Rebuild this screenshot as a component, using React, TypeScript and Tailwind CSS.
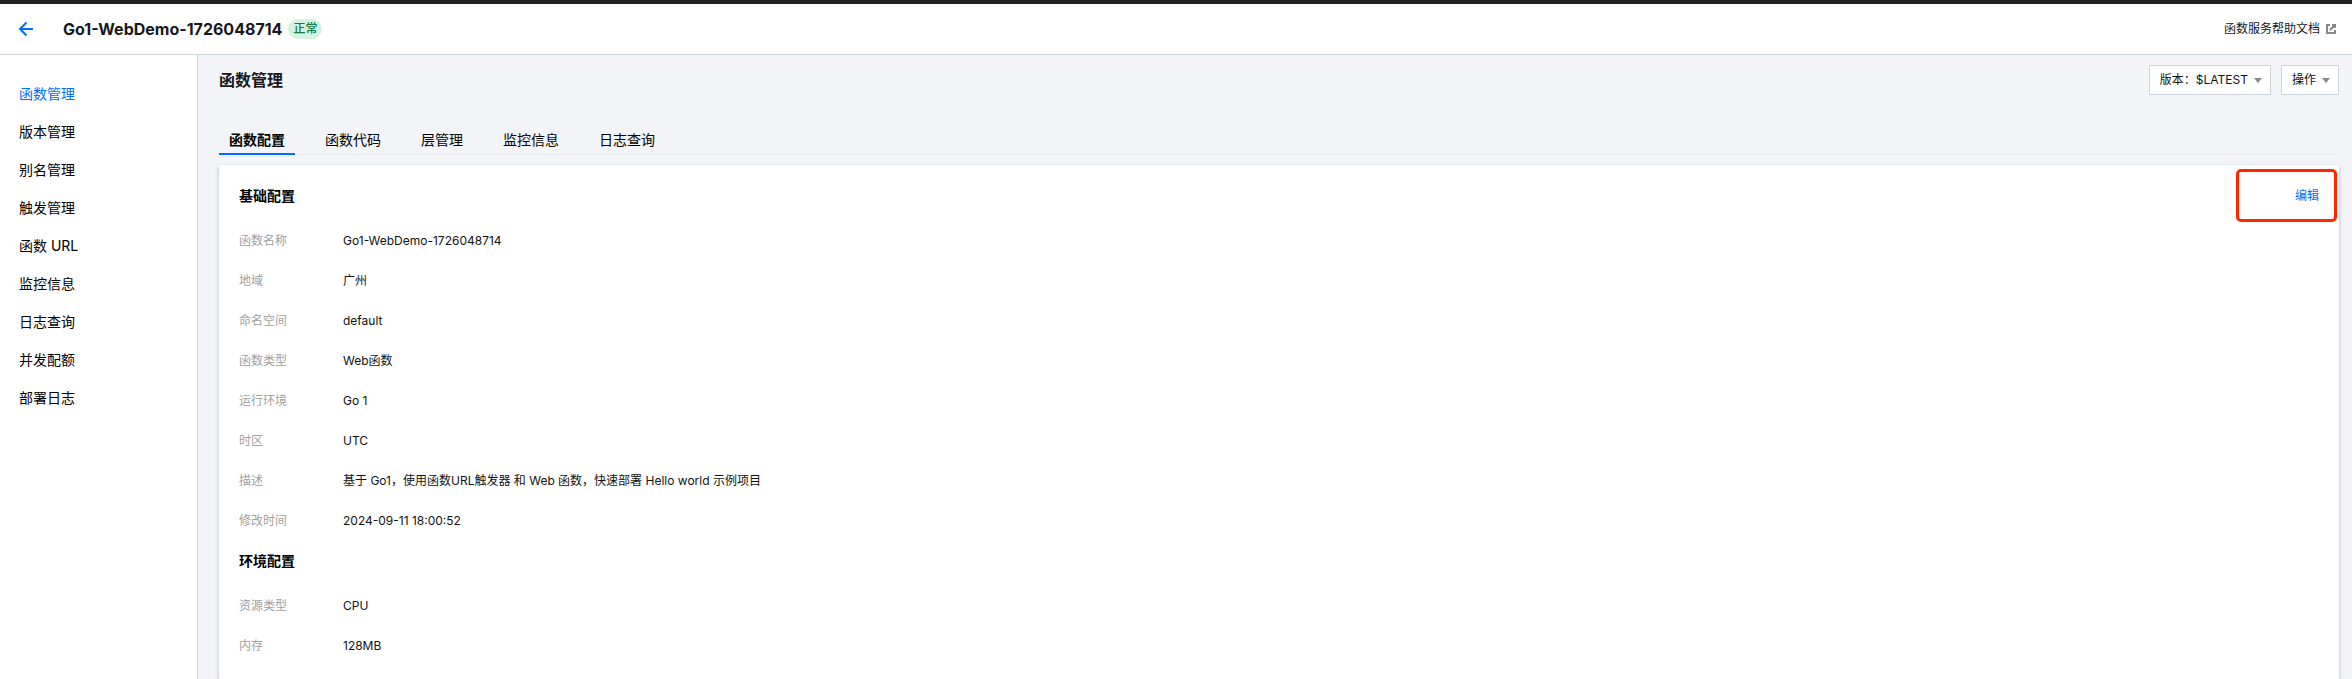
import React from "react";

const menu = ["函数管理", "版本管理", "别名管理", "触发管理", "函数 URL", "监控信息", "日志查询", "并发配额", "部署日志"];
const tabs = ["函数配置", "函数代码", "层管理", "监控信息", "日志查询"];

const sections: { title: string; rows: [string, string][] }[] = [
  {
    title: "基础配置",
    rows: [
      ["函数名称", "Go1-WebDemo-1726048714"],
      ["地域", "广州"],
      ["命名空间", "default"],
      ["函数类型", "Web函数"],
      ["运行环境", "Go 1"],
      ["时区", "UTC"],
      ["描述", "基于 Go1，使用函数URL触发器 和 Web 函数，快速部署 Hello world 示例项目"],
      ["修改时间", "2024-09-11 18:00:52"],
    ],
  },
  {
    title: "环境配置",
    rows: [
      ["资源类型", "CPU"],
      ["内存", "128MB"],
    ],
  },
];

function Caret() {
  return (
    <svg className="h-[5px] w-2 fill-[#888]" viewBox="0 0 8 5" aria-hidden="true">
      <path d="M0 0h8L4 5z" />
    </svg>
  );
}

function DropButton({ children }: { children: React.ReactNode }) {
  return (
    <button type="button" className="flex h-[30px] items-center gap-[6px] border border-[#cfd5de] bg-white pl-[10px] pr-2 text-xs text-[#111]">
      {children}
      <Caret />
    </button>
  );
}

export default function App() {
  return (
    <div className="flex min-h-screen flex-col bg-[#f2f4f8] font-[Inter,'Noto_Sans_CJK_SC',sans-serif] text-black">
      <header className="flex h-[55px] items-center border-b border-t-4 border-b-[#cfd5de] border-t-[#222] bg-white pl-[18px] pr-4">
        <button type="button" aria-label="返回" className="flex size-4 items-center justify-center">
          <svg className="size-4 fill-none stroke-[#006eff] stroke-2" viewBox="0 0 16 16" aria-hidden="true">
            <path d="M15 8H2.500M8.500 1.500L2 8l6.500 6.500" />
          </svg>
        </button>
        <h1 className="ml-[29px] text-base font-bold text-[#16181c]">Go1-WebDemo-1726048714</h1>
        <span className="ml-[6px] flex h-5 items-center rounded-full bg-[#d4f3e1] px-[5px] text-xs font-medium text-[#107a4a]">正常</span>
        <a href="#docs" className="ml-auto flex items-center gap-[6px] text-xs text-[#16181c]">
          函数服务帮助文档
          <svg className="size-[10px] fill-none stroke-[#888] stroke-2" viewBox="0 0 10 10" aria-hidden="true">
            <path d="M4 1H1v8h8V6M6 1h3v3M9 1L4 6" />
          </svg>
        </a>
      </header>
      <div className="flex flex-1">
        <nav className="w-[198px] shrink-0 border-r border-[#cfd5de] bg-white pt-5">
          <ul>
            {menu.map((item, i) => (
              <li key={item}>
                <a href={"#menu-" + i} className={"flex h-[38px] items-center pl-[19px] text-sm " + (i === 0 ? "text-[#006eff]" : "text-black")}>
                  {item}
                </a>
              </li>
            ))}
          </ul>
        </nav>
        <main className="flex min-w-0 flex-1 flex-col pl-[21px] pr-[13px]">
          <div className="flex h-[50px] items-center justify-between">
            <h2 className="text-base font-bold text-[#16181c]">函数管理</h2>
            <div className="flex gap-[10px]">
              <DropButton>版本：$LATEST</DropButton>
              <DropButton>操作</DropButton>
            </div>
          </div>
          <div role="tablist" className="mt-5 flex h-[30px] items-end gap-5 border-b border-[#e5e8ed]">
            {tabs.map((tab, i) => (
              <button
                key={tab}
                type="button"
                role="tab"
                aria-selected={i === 0}
                className={"-mb-px h-[30px] border-b-2 px-[10px] pt-[2px] text-sm " + (i === 0 ? "border-[#006eff] font-bold" : "border-transparent")}
              >
                {tab}
              </button>
            ))}
          </div>
          <div className="relative mt-[10px] flex-1 bg-white px-5 pt-[11px] shadow-[0_2px_4px_rgba(54,58,80,0.32)]">
            {sections.map((section, i) => (
              <section key={section.title}>
                <div className="mb-[5px] flex h-10 items-center justify-between">
                  <h3 className="text-sm font-bold">{section.title}</h3>
                  {i === 0 && (
                    <button type="button" className="text-xs text-[#006eff]">
                      编辑
                    </button>
                  )}
                </div>
                <dl>
                  {section.rows.map(([label, value]) => (
                    <div key={label} className="flex h-10 items-center text-xs">
                      <dt className="w-[104px] text-[#a0a0a0]">{label}</dt>
                      <dd className="text-[#111]">{value}</dd>
                    </div>
                  ))}
                </dl>
              </section>
            ))}
            <div className="pointer-events-none absolute right-[2px] top-[4px] h-[53px] w-[101px] rounded-[5px] border-[3px] border-[#ff2600]" />
          </div>
        </main>
      </div>
    </div>
  );
}
